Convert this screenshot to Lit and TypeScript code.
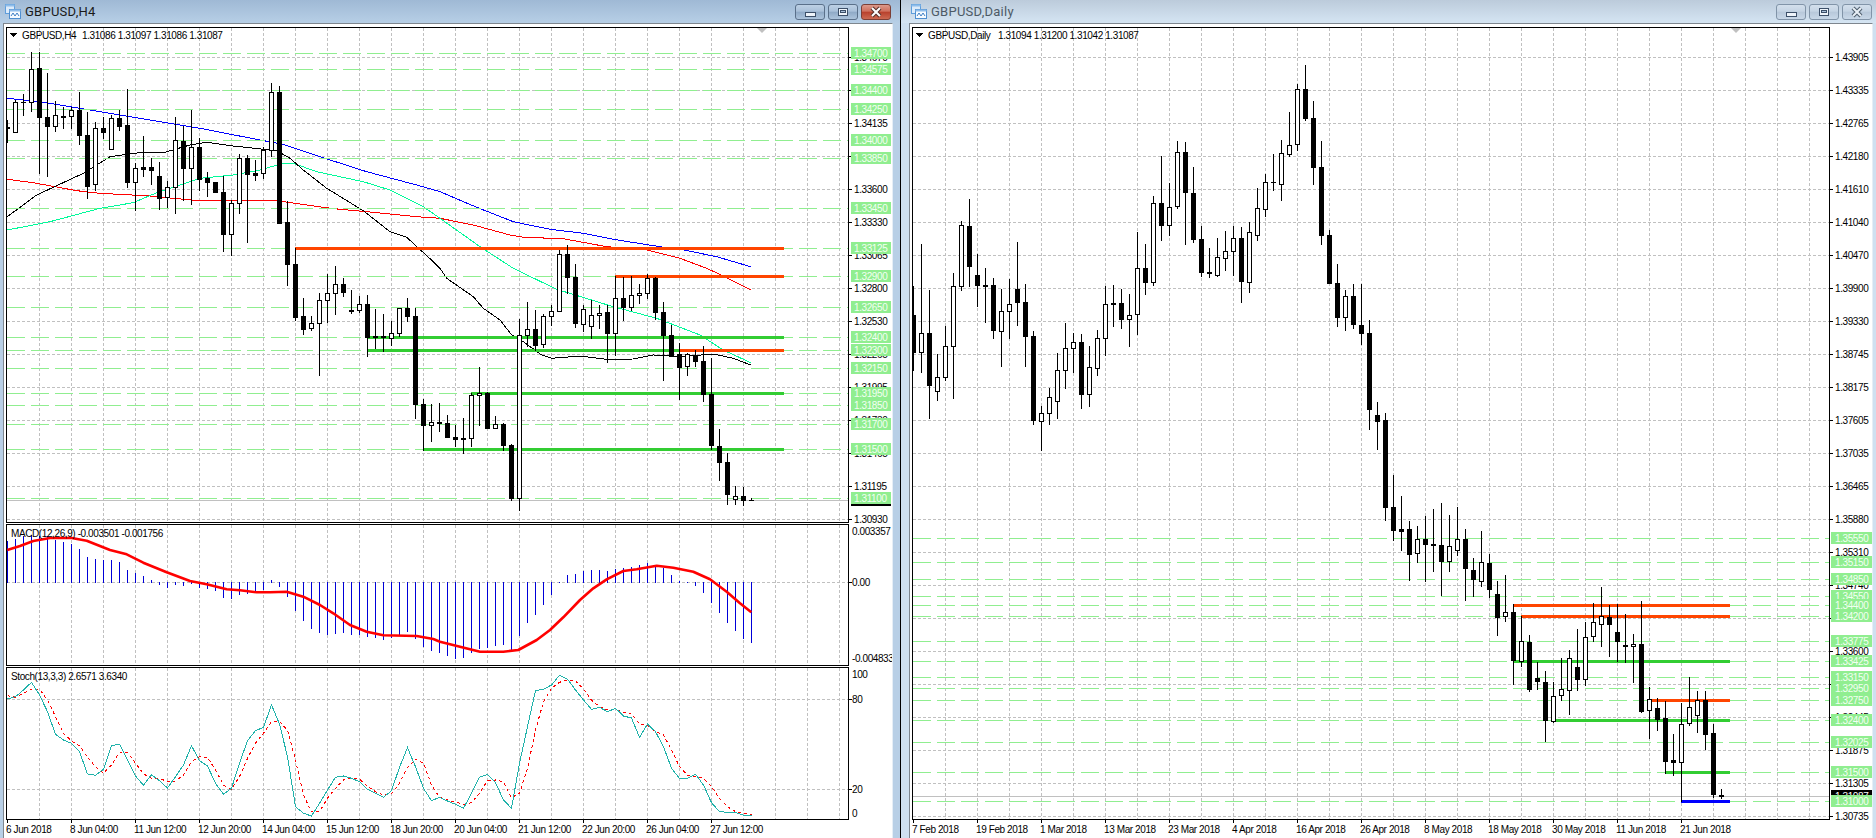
import { LitElement, html, css, svg } from "lit";
import { customElement } from "lit/decorators.js";

type C = [number, number, number, number, number];
const W = 1, B = 0;
const off = (a: C[], d: number): C[] => a.map(([h, t, b, l, u]) => [h + d, t + d, b + d, l + d, u] as C);

const LA: C[] = [
  [360,381,386,428,B],[300,307,397,397,W],[283,306,308,345,B],[156,208,307,333,W],[158,204,353,520,B],[219,351,380,530,B],
  [303,346,380,395,W],[323,349,353,385,B],[323,331,350,385,W],[276,330,407,432,B],[336,405,558,594,B],[368,385,554,570,W],
  [353,384,398,414,B],[345,355,449,449,W],[330,354,378,392,B],[267,375,548,562,B],[490,505,548,630,W],[410,501,507,528,B],
  [476,501,510,552,B],[486,528,594,627,B],[545,562,593,622,W],[352,421,563,640,W],[378,423,506,602,B],[330,442,506,612,W],
  [415,442,537,572,B],[516,534,548,590,B],[546,546,578,578,B],[530,576,704,755,B],[600,610,704,765,W],[462,475,610,640,W],
  [465,475,524,728,B],[480,519,525,542,B],[442,451,521,536,W],[250,277,451,470,W],[258,277,671,671,B],[605,667,794,855,B],[745,792,951,960,B],
];
const LB: C[] = [
  [175,228,267,282,B],[228,250,266,272,W],[160,181,250,405,W],[102,160,182,248,W],[78,133,160,224,W],[115,132,158,168,B],
  [150,210,215,220,B],[170,193,212,218,W],[165,192,291,350,B],[207,289,293,325,B],[222,289,293,335,B],[243,281,295,315,W],
  [205,205,281,290,W],[175,205,230,245,B],[205,229,494,534,B],[478,493,557,630,B],[492,547,556,605,W],[490,546,551,575,B],
  [525,549,593,593,B],[555,591,599,618,B],
];
const LC: C[] = [
  [535,595,599,640,B],[460,465,595,620,W],[381,459,466,555,W],[457,459,566,566,B],[528,553,566,566,W],[550,552,617,630,B],
  [612,615,776,782,B],[238,286,776,810,W],[186,268,287,318,W],[210,268,317,332,B],[222,229,313,323,W],[195,214,229,255,W],
  [30,43,214,214,W],[15,42,113,160,B],[72,111,251,263,B],[195,208,253,275,W],[180,226,260,296,W],[195,220,226,265,W],
  [195,216,281,367,B],[110,175,281,347,W],[112,175,203,240,B],[108,166,203,212,W],[132,160,166,190,W],[102,115,160,175,W],
  [112,114,218,238,B],[186,217,287,422,B],[256,286,345,350,B],[310,343,383,477,B],[340,343,379,405,W],[330,345,365,380,B],
  [318,364,464,485,B],[355,463,617,628,B],[567,619,668,720,B],[640,667,764,792,B],[738,769,778,792,W],[742,769,782,797,B],[775,780,781,782,B],
];
const LEFT: C[] = [...LA, ...off(LB, 720), ...off(LC, 720)];

const RA: C[] = [
  [858,945,1058,1112,B],[732,1000,1058,1118,W],[870,1000,1155,1255,B],[1062,1133,1175,1202,W],[978,1040,1133,1140,W],[820,860,1040,1196,W],
  [665,676,860,872,W],[597,679,800,858,B],[762,826,857,920,B],[805,856,860,968,B],[835,856,992,1016,B],[868,934,995,1098,W],
  [838,913,934,1016,W],[726,868,908,975,B],[852,907,1010,1098,B],[994,1009,1262,1272,B],[1218,1240,1265,1350,W],[1165,1192,1240,1272,W],
  [1060,1111,1205,1255,W],[970,1045,1111,1166,W],[1000,1027,1045,1116,W],[1003,1027,1184,1226,B],[1038,1102,1184,1218,W],[992,1015,1105,1125,W],
  [858,913,1015,1067,W],[856,909,912,978,B],[868,910,958,986,B],[882,946,958,1040,W],[696,805,943,1002,W],[732,805,848,882,B],
  [588,610,848,856,W],[468,610,677,720,B],[550,622,677,705,W],[424,457,620,626,W],[428,457,578,734,B],[502,580,718,728,B],
  [680,718,818,830,B],[744,817,821,833,B],[715,772,827,830,W],[693,754,775,812,W],[680,716,754,825,W],[682,715,845,908,B],
  [668,698,847,878,W],[565,625,707,722,W],[522,548,628,648,W],[462,546,548,572,B],[420,460,553,600,W],[336,436,464,468,W],
  [252,268,433,452,W],[195,268,356,360,B],[303,355,503,552,B],[424,502,707,732,B],[690,706,849,850,B],[792,849,953,978,B],
  [870,889,953,992,W],[852,889,974,984,B],[852,976,1001,1032,B],[960,1000,1229,1287,B],[1206,1246,1263,1347,B],
  [1240,1260,1522,1562,B],[1425,1522,1592,1620,B],
  [1488,1587,1593,1650,B],[1563,1587,1662,1740,B],[1580,1618,1661,1688,W],[1550,1618,1634,1743,B],[1527,1632,1637,1715,B],
  [1509,1635,1685,1785,B],[1545,1639,1685,1713,W],[1523,1618,1652,1665,W],[1587,1618,1706,1800,B],
];
const RB: C[] = [
  [115,150,177,230,B],[33,127,185,200,W],[102,129,207,233,B],[184,223,293,345,B],[165,277,290,305,W],[252,277,420,492,B],
  [288,364,425,440,W],[345,367,507,513,B],[427,475,485,507,B],[453,487,602,665,B],[486,529,605,607,W],[415,508,526,540,W],
  [390,415,512,582,W],[328,441,477,510,B],[308,352,479,497,W],[250,307,350,365,W],[202,289,314,378,W],[255,292,314,408,B],
  [252,337,365,423,B],[282,376,380,428,B],[342,373,380,486,W],[243,372,573,576,B],[502,538,572,654,W],[535,565,597,630,B],
  [545,595,723,760,B],[642,720,728,765,B],[550,613,728,844,W],[472,562,611,615,W],[513,541,587,636,W],[513,540,644,688,B],
  [612,640,822,833,B],[807,826,829,835,B],
];
const RIGHT: C[] = [...RA, ...off(RB, 1560)];

const pts = (a: number[], dx = 0, dy = 0): [number, number][] => {
  const o: [number, number][] = [];
  for (let i = 0; i < a.length; i += 2) o.push([a[i] + dx, a[i + 1] + dy]);
  return o;
};
const line3 = (p: [number, number][]) => p.map(([x, y]) => `${(x / 3).toFixed(1)},${(y / 3).toFixed(1)}`).join(" ");

const BLUE = [...pts([22,295,120,305,240,325,360,345,480,365,600,385,780,420,850,433,960,470,1100,515,1250,555]), ...pts([0,575,110,622,220,665,330,688,430,700,520,718,660,740,732,750,830,770,932,800], 1320)];
const RED = [...pts([22,538,100,548,230,572,300,580,450,588,520,595,600,602,720,602,830,602,970,622,1020,628,1100,635,1250,650]), ...pts([0,655,100,675,210,705,250,712,370,716,500,740,620,750,720,775,800,805,850,828,932,870], 1320)];
const SPRING = [...pts([22,690,150,665,300,625,400,608,470,578,550,552,600,535,700,525,780,510,850,490,880,490,950,515,1090,545,1170,570,1270,620]), ...pts([0,655,120,740,220,805,350,868,520,920,650,955,780,1005,850,1050,932,1088], 1320)];
const BLACKMA = [...pts([22,650,110,585,250,520,330,470,380,463,420,458,490,458,570,435,620,427,700,438,830,452,870,475,910,510,980,565,1090,632,1170,695,1220,712,1300,785]), ...pts([0,805,20,835,100,890,130,925,180,960,215,1005,250,1025,305,1065,335,1075,420,1068,500,1078,580,1077,640,1065,720,1070,820,1062,880,1075,932,1095], 1320)];
const MACDLINE = [...pts([22,90,60,78,100,63,150,54,215,54,260,62,330,90,380,103,430,128,500,157,570,183,620,193,680,208,720,211,770,217,810,217,860,215,910,230,960,255,1000,280,1050,315,1100,335,1150,346,1250,348,1300,357], 0, 1560), ...pts([0,365,120,395,190,395,235,390,290,360,330,330,370,292,420,240,460,205,500,178,550,153,590,148,650,137,700,143,760,155,810,178,860,215,900,250,934,277], 1320, 1560)];
const HIST = [63,57,50,45,48,50,62,68,72,87,113,117,122,122,126,150,161,170,180,194,203,194,197,190,201,206,212,233,236,224,220,216,207,180,200,230,270,302,326,338,342,340,338,342,342,350,353,357,352,342,335,355,378,390,398,407,414,413,398,385,381,375,374,388,345,308,282,252,224,187,165,162,153,150,150,153,148,145,141,136,130,135,146,165,183,186,197,216,248,276,308,332,354,366];
const TEAL = [537,530,510,487,525,575,643,660,670,695,762,766,748,677,673,720,768,796,764,782,804,770,735,677,722,738,790,823,805,730,662,632,622,555,612,710,860,880,888,850,810,772,768,775,785,808,820,832,812,742,683,740,805,842,832,843,853,865,820,772,763,788,840,865,730,620,512,508,495,466,478,510,540,568,562,575,565,588,594,652,612,635,680,745,775,775,763,795,848,875,877,877,886,886];
const SIGNAL = [527,532,520,508,508,540,590,640,663,677,712,740,760,735,697,697,730,762,775,775,785,783,765,725,710,712,750,795,808,770,715,670,640,605,605,630,720,825,876,875,835,805,780,775,778,798,815,825,822,790,742,718,730,795,832,840,846,853,848,820,782,780,785,833,820,745,630,545,505,487,480,482,508,540,560,570,568,578,580,612,617,635,645,690,740,765,770,775,800,835,860,875,880,884];

const barLine = (a: number[]) => a.map((y, i) => `${7 + 8 * i + 0.5},${((y + 1560) / 3).toFixed(1)}`).join(" ");

type Lab = [number, string];
const L_GREEN: Lab[] = [[53,"1.34700"],[69,"1.34575"],[90,"1.34400"],[109,"1.34250"],[140,"1.34000"],[158,"1.33850"],[208,"1.33450"],[248,"1.33125"],[276,"1.32900"],[307,"1.32650"],[337,"1.32400"],[350,"1.32300"],[368,"1.32150"],[393,"1.31950"],[405,"1.31850"],[424,"1.31700"],[449,"1.31500"],[498,"1.31100"]];
const R_GREEN: Lab[] = [[538,"1.35550"],[562,"1.35150"],[579,"1.34850"],[596,"1.34550"],[605,"1.34400"],[616,"1.34200"],[641,"1.33775"],[661,"1.33425"],[677,"1.33150"],[688,"1.32950"],[700,"1.32750"],[720,"1.32400"],[742,"1.32025"],[772,"1.31500"],[801,"1.31000"]];
const L_AXIS = ["1.34670","1.34405","1.34135","1.33865","1.33600","1.33330","1.33065","1.32800","1.32530","1.32265","1.31995","1.31730","1.31465","1.31195","1.30930"];
const R_AXIS = ["1.43905","1.43335","1.42765","1.42180","1.41610","1.41040","1.40470","1.39900","1.39330","1.38745","1.38175","1.37605","1.37035","1.36465","1.35880","1.35310","1.34740","1.34170","1.33600","1.33030","1.32445","1.31875","1.31305","1.30735"];
const L_DATES = ["6 Jun 2018","8 Jun 04:00","11 Jun 12:00","12 Jun 20:00","14 Jun 04:00","15 Jun 12:00","18 Jun 20:00","20 Jun 04:00","21 Jun 12:00","22 Jun 20:00","26 Jun 04:00","27 Jun 12:00"];
const R_DATES = ["7 Feb 2018","19 Feb 2018","1 Mar 2018","13 Mar 2018","23 Mar 2018","4 Apr 2018","16 Apr 2018","26 Apr 2018","8 May 2018","18 May 2018","30 May 2018","11 Jun 2018","21 Jun 2018"];

const ORANGE = "#ff4500", LIME = "#32cd32", PURE = "#0000ff";
type Thick = [number, number, number, string];
const L_THICK: Thick[] = [[248,295,784,ORANGE],[276,615,784,ORANGE],[350,679,784,ORANGE],[337,367,784,LIME],[350,367,679,LIME],[393,471,784,LIME],[449,423,784,LIME]];
const R_THICK: Thick[] = [[605,1513,1730,ORANGE],[616,1521,1730,ORANGE],[661,1513,1730,LIME],[700,1649,1730,ORANGE],[720,1553,1730,LIME],[772,1665,1730,LIME],[801,1681,1730,PURE]];

const range = (n: number) => Array.from({ length: n }, (_, i) => i);

function vgrid(x0: number, n: number, y0: number, y1: number) {
  return range(n).map((k) => svg`<line class="grid" x1=${x0 + 32 * k + 0.5} x2=${x0 + 32 * k + 0.5} y1=${y0} y2=${y1}></line>`);
}
function hgrid(rows: number[], x0: number, x1: number) {
  return rows.map((r) => svg`<line class="grid" x1=${x0} x2=${x1} y1=${r + 0.5} y2=${r + 0.5}></line>`);
}
function border(l: number, t: number, r: number, b: number) {
  return svg`
    <rect class="ink" x=${l} y=${t} width="1" height=${b - t + 1}></rect>
    <rect class="ink" x=${l} y=${t} width=${r - l + 1} height="1"></rect>
    <rect class="ink" x=${l} y=${b} width=${r - l + 1} height="1"></rect>
    <rect class="ink" x=${r} y=${t} width="1" height=${b - t + 1}></rect>`;
}
function candles(data: C[], startX: number, minX: number) {
  return data.map(([h, t, b, l, up], i) => {
    const cx = startX + 8 * i;
    const hi = Math.floor(h / 3), lo = Math.floor(l / 3), y0 = Math.floor(t / 3), y1 = Math.floor(b / 3);
    const hgt = Math.max(y1 - y0 + 1, 1);
    const bx = Math.max(cx - 2, minX), bw = cx + 3 - bx;
    return svg`
      <rect class="ink" x=${cx} y=${hi} width="1" height=${lo - hi + 1}></rect>
      <rect class="ink" x=${bx} y=${y0} width=${bw} height=${hgt}></rect>
      ${up && hgt > 2 ? svg`<rect class="paper" x=${bx + 1} y=${y0 + 1} width=${bw - 2} height=${hgt - 2}></rect>` : ""}`;
  });
}
function greenDash(labs: Lab[], x0: number, x1: number) {
  return labs.map(([r]) => svg`<line class="level" x1=${x0} x2=${x1} y1=${r + 0.5} y2=${r + 0.5}></line>`);
}
function thick(list: Thick[]) {
  return list.map(([r, a, b, c]) => svg`<rect x=${a} y=${r - 1} width=${b - a} height="3" fill=${c}></rect>`);
}
function axisLabels(rows: number[], vals: string[], tick: number, x: number) {
  return rows.map((r, i) => svg`
    <rect class="ink" x=${tick} y=${r} width="3" height="1"></rect>
    <text class="t" x=${x} y=${r + 4}>${vals[i]}</text>`);
}
function greenLabels(labs: Lab[], x: number, w: number, tx: number) {
  return labs.map(([r, v]) => svg`
    <rect class="chip" x=${x} y=${r - 6} width=${w} height="12"></rect>
    <text class="t onchip" x=${tx} y=${r + 4}>${v}</text>`);
}
function headerMark(x: number) {
  return svg`<polygon class="ink" points="${x},33 ${x + 7},33 ${x + 3.5},37"></polygon>`;
}
function shiftMark(cx: number) {
  return svg`<polygon class="mark" points="${cx - 5},28 ${cx + 5},28 ${cx},33"></polygon>`;
}
function pane(x: number, y: number, w: number, h: number, content: unknown) {
  return html`<svg class="pane" width=${w} height=${h} viewBox="${x} ${y} ${w} ${h}">${content}</svg>`;
}
function dateAxis(x: number, w: number, labels: string[], tickX: number) {
  return html`<div class="axis">${pane(x, 820, w, 18, svg`
    ${labels.map((d, i) => svg`
      <rect class="ink" x=${tickX + 64 * i} y="820" width="1" height="3"></rect>
      <text class="t" x=${tickX - 1 + 64 * i} y="833">${d}</text>`)}`)}</div>`;
}

function leftMain() {
  const rows = range(15).map((k) => 57 + 33 * k);
  return pane(6, 27, 886, 496, svg`
    ${vgrid(39, 26, 28, 522)}
    ${hgrid(rows, 7, 848)}
    <rect class="bid" x="7" y="500" width="841" height="1"></rect>
    <polyline class="ma" stroke="#0000ff" points=${line3(BLUE)}></polyline>
    <polyline class="ma" stroke="#ff0000" points=${line3(RED)}></polyline>
    <polyline class="ma" stroke="#00fa9a" points=${line3(SPRING)}></polyline>
    <polyline class="ma" stroke="#000000" points=${line3(BLACKMA)}></polyline>
    ${greenDash(L_GREEN, 7, 848)}
    ${thick(L_THICK)}
    ${candles(LEFT, 7, 7)}
    ${shiftMark(762)}
    ${border(6, 27, 848, 522)}
    ${axisLabels(rows, L_AXIS, 849, 854)}
    <rect class="ink" x="851" y="494" width="40" height="12"></rect>
    <text class="t onblack" x="854" y="504">1.31087</text>
    ${greenLabels(L_GREEN, 851, 40, 854)}
    ${headerMark(10)}
    <text class="t" x="22" y="39">GBPUSD,H4</text>
    <text class="t" x="82" y="39">1.31086 1.31097 1.31086 1.31087</text>`);
}
function macd() {
  return pane(6, 524, 886, 142, svg`
    ${vgrid(39, 26, 525, 665)}
    ${hgrid([582], 7, 848)}
    ${HIST.map((v, i) => {
      const e = Math.floor((v + 1560) / 3);
      const a = Math.min(e, 582), b = Math.max(e, 582);
      return svg`<rect class="hist" x=${7 + 8 * i} y=${a} width="1" height=${b - a + 1}></rect>`;
    })}
    <polyline class="ma sig" stroke="#ff0000" points=${line3(MACDLINE)}></polyline>
    ${border(6, 524, 848, 665)}
    <text class="t" x="11" y="537">MACD(12,26,9) -0.003501 -0.001756</text>
    <rect class="ink" x="849" y="582" width="3" height="1"></rect>
    <text class="t" x="852" y="535">0.003357</text>
    <text class="t" x="852" y="586">0.00</text>
    <text class="t" x="852" y="662">-0.004833</text>`);
}
function stoch() {
  return pane(6, 667, 886, 153, svg`
    ${vgrid(39, 26, 668, 819)}
    ${hgrid([699, 789], 7, 848)}
    <polyline class="ma" stroke="#ff0000" stroke-dasharray="3 3" points=${barLine(SIGNAL)}></polyline>
    <polyline class="ma" stroke="#20b2aa" points=${barLine(TEAL)}></polyline>
    ${border(6, 667, 848, 819)}
    <text class="t" x="11" y="680">Stoch(13,3,3) 2.6571 3.6340</text>
    <rect class="ink" x="849" y="699" width="3" height="1"></rect>
    <rect class="ink" x="849" y="789" width="3" height="1"></rect>
    <text class="t" x="852" y="678">100</text>
    <text class="t" x="852" y="703">80</text>
    <text class="t" x="852" y="793">20</text>
    <text class="t" x="852" y="817">0</text>`);
}
function rightMain() {
  const rows = range(24).map((k) => 57 + 33 * k);
  return pane(912, 27, 960, 793, svg`
    ${vgrid(945, 28, 28, 819)}
    ${hgrid(rows, 913, 1829)}
    <rect class="bid" x="913" y="796" width="916" height="1"></rect>
    ${greenDash(R_GREEN, 913, 1829)}
    ${thick(R_THICK)}
    ${candles(RIGHT, 913, 913)}
    ${shiftMark(1736)}
    ${border(912, 27, 1829, 819)}
    ${axisLabels(rows, R_AXIS, 1830, 1835)}
    <rect class="ink" x="1831" y="790" width="41" height="12"></rect>
    <text class="t onblack" x="1835" y="800">1.31087</text>
    ${greenLabels(R_GREEN, 1831, 41, 1835)}
    ${headerMark(916)}
    <text class="t" x="928" y="39">GBPUSD,Daily</text>
    <text class="t" x="998" y="39">1.31094 1.31200 1.31042 1.31087</text>`);
}

const appIcon = html`<svg class="icon" width="16" height="15" viewBox="0 0 16 15">
  <rect x="0.5" y="0.5" width="9" height="9" fill="#dcebfa" stroke="#5f9edb"></rect>
  <rect x="0.5" y="0.5" width="9" height="2" fill="#8fbdea"></rect>
  <rect x="4.5" y="5.5" width="11" height="9" fill="#f6fbff" stroke="#4f8fd0"></rect>
  <rect x="4.5" y="5.5" width="11" height="2" fill="#8fbdea"></rect>
  <path d="M6 12l2-3 2 3 2-3 2 3" fill="none" stroke="#3f7fc4"></path>
</svg>`;

const winButtons = html`
  <span class="btn"><svg width="28" height="14" viewBox="0 0 28 14"><rect class="glyph" x="9.5" y="7.5" width="10" height="4"></rect></svg></span>
  <span class="btn"><svg width="28" height="14" viewBox="0 0 28 14"><rect class="glyph" x="9.5" y="3.5" width="9" height="7"></rect><rect class="glyph-in" x="11.5" y="5.5" width="5" height="2"></rect></svg></span>
  <span class="btn close"><svg width="28" height="14" viewBox="0 0 28 14"><path class="x-o" d="M10 3l8 8M18 3l-8 8"></path><path class="x-i" d="M10 3l8 8M18 3l-8 8"></path></svg></span>`;

@customElement("app-root")
export class AppRoot extends LitElement {
  static styles = css`
    :host { display: flex; width: 1876px; height: 838px; overflow: hidden; background: #b8cfe6; }
    .win { display: flex; flex-direction: column; box-sizing: border-box; height: 838px; }
    .win.active { width: 901px; padding: 0 7px 0 3px; border-right: 1px solid #000; background: #b8cfe6; }
    .win.idle { width: 975px; padding: 0 3px 0 8px; background: #cfe0f0; }
    .title { height: 23px; display: flex; align-items: center; flex: none; margin-right: -7px; margin-left: -3px; padding-right: 9px;
      background: linear-gradient(#9fb9d5, #b7cfe6); font: 13px Roboto, "Liberation Sans", sans-serif; letter-spacing: 0.25px; color: #1a1a1a; }
    .idle .title { margin-left: -8px; margin-right: -3px; padding-right: 4px; background: linear-gradient(#bccbdb, #d5e5f3); color: #4d5a66; }
    .icon { margin: 0 4px 0 5px; flex: none; }
    .idle .icon { margin-left: 10px; margin-right: 4px; }
    .caption { flex: 1; }
    .btns { display: flex; gap: 3px; }
    .btn { box-sizing: border-box; width: 30px; height: 16px; display: block; border: 1px solid #5a708a; border-radius: 3px;
      background: linear-gradient(#bdd0e5 0, #a9c0d9 45%, #8ea9c6 50%, #adc4dc 100%); }
    .btn svg { display: block; }
    .btn.close { border-color: #7b3f36; background: linear-gradient(#dc9a8c 0, #cf6f5c 45%, #b8402c 50%, #cc6a52 100%); }
    .idle .btn, .idle .btn.close { border-color: #8194a8; background: linear-gradient(#d3dfec 0, #c5d4e4 45%, #b7c8da 50%, #c9d8e8 100%); }
    .glyph { fill: #eef4fa; stroke: #3c4f68; }
    .glyph-in { fill: #a9c0d9; stroke: #3c4f68; }
    .x-o { fill: none; stroke: #54302a; stroke-width: 4; }
    .x-i { fill: none; stroke: #ffffff; stroke-width: 2; }
    .idle .x-o { stroke: #4d5c6c; }
    .idle .x-i { stroke: #e8eff6; }
    .frame { flex: 1; display: flex; flex-direction: column; gap: 1px; box-sizing: border-box; min-height: 0; overflow: hidden;
      background: #fff; border-top: 1px solid #7e868e; border-left: 1px solid #7e868e; border-right: 1px solid #e6eef6; padding: 3px 0 0 2px; }
    .pane { display: block; flex: none; }
    .axis { margin-top: -1px; flex: none; }
    .ink { fill: #000; stroke: none; shape-rendering: crispEdges; }
    .paper { fill: #fff; shape-rendering: crispEdges; }
    .grid { stroke: #c0c0c0; stroke-width: 1; stroke-dasharray: 3 2; shape-rendering: crispEdges; }
    .level { stroke: #90ee90; stroke-width: 1; stroke-dasharray: 18 6; shape-rendering: crispEdges; }
    .bid { fill: #c0c0c0; shape-rendering: crispEdges; }
    .mark { fill: #c0c0c0; }
    .ma { fill: none; stroke-width: 1; shape-rendering: crispEdges; }
    .ma.sig { stroke-width: 2.6; shape-rendering: auto; stroke-linejoin: round; }
    .hist { fill: #0000d8; shape-rendering: crispEdges; }
    .chip { fill: #90ee90; shape-rendering: crispEdges; }
    .t { font: 10px "Liberation Sans", Arial, sans-serif; letter-spacing: -0.4px; fill: #000; white-space: pre; }
    .onchip { fill: #f2fff2; }
    .onblack { fill: #fff; }
  `;

  render() {
    return html`
      <section class="win active">
        <header class="title">${appIcon}<span class="caption">GBPUSD,H4</span><span class="btns">${winButtons}</span></header>
        <div class="frame">
          ${leftMain()}${macd()}${stoch()}
          ${dateAxis(6, 886, L_DATES, 7)}
        </div>
      </section>
      <section class="win idle">
        <header class="title">${appIcon}<span class="caption">GBPUSD,Daily</span><span class="btns">${winButtons}</span></header>
        <div class="frame">
          ${rightMain()}
          ${dateAxis(912, 960, R_DATES, 913)}
        </div>
      </section>`;
  }
}
